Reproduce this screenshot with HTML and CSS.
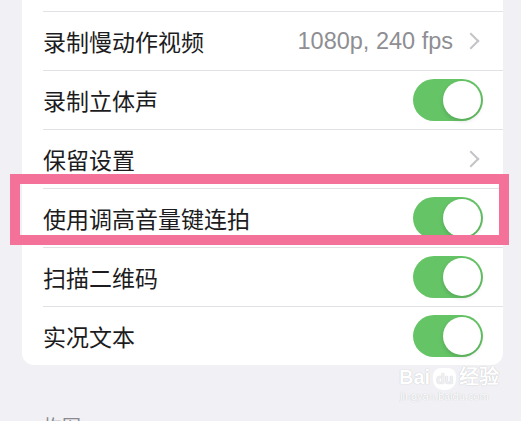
FILE: index.html
```html
<!DOCTYPE html>
<html lang="zh-CN">
<head>
    <meta charset="UTF-8">
    <meta name="viewport" content="width=device-width, initial-scale=1.0">
    <title>相机设置</title>
    <link rel="stylesheet" href="styles.css">
</head>
<body>
    <div class="card">
        <div class="row-top"></div>

        <div class="row">
            <span class="label">录制慢动作视频</span>
            <span class="value">1080p, 240 fps</span>
            <span class="chevron"></span>
        </div>

        <div class="row">
            <span class="label">录制立体声</span>
            <span class="toggle on"></span>
        </div>

        <div class="row">
            <span class="label">保留设置</span>
            <span class="chevron"></span>
        </div>

        <div class="row highlighted">
            <span class="label">使用调高音量键连拍</span>
            <span class="toggle on"></span>
            <div class="mark"></div> <!-- 粉色框 -->
        </div>

        <div class="row">
            <span class="label">扫描二维码</span>
            <span class="toggle on"></span>
        </div>

        <div class="row">
            <span class="label">实况文本</span>
            <span class="toggle on"></span>
        </div>
    </div>

    <div class="section-title">构图</div>

    <div class="watermark">
        <div class="wm-logo">Bai<span class="wm-paw">du</span>经验</div>
        <div class="wm-url">jingyan.baidu.com</div>
    </div>
</body>
</html>
```

FILE: styles.css
```css
body {
    margin: 0;
    background-color: #f0f0f5;
    font-family: "Noto Sans CJK SC", "Noto Sans", sans-serif;
    height: 421px;
    overflow: hidden;
    position: relative;
}

.card {
    background-color: #fff;
    margin: 0 18px 0 22px;
    border-radius: 0 0 12px 12px;
}

.row-top {
    height: 11px;
}

.row {
    display: flex;
    align-items: center;
    height: 58px;
    margin-left: 21px;
    padding-right: 20px;
    border-top: 1px solid #e2e2e6;
    position: relative;
}

.label {
    flex: 1;
    font-size: 23px;
    color: #1c1c1e;
}

.value {
    font-family: "Liberation Sans", Arial, sans-serif;
    font-size: 23.5px;
    color: #8e8e93;
    margin-right: 12px;
}

/* seta cinza */
.chevron {
    width: 10px;
    height: 10px;
    border-top: 2px solid #c4c4c8;
    border-right: 2px solid #c4c4c8;
    transform: rotate(45deg);
    margin-right: 6px;
}

.toggle {
    width: 70px;
    height: 42px;
    border-radius: 21px;
    background-color: #e5e5ea;
    position: relative;
}

.toggle.on {
    background-color: #65c466;
}

.toggle::after {
    content: "";
    position: absolute;
    top: 2px;
    left: 2px;
    width: 38px;
    height: 38px;
    border-radius: 50%;
    background-color: #fff;
    box-shadow: 0 2px 4px rgba(0, 0, 0, 0.15);
}

.toggle.on::after {
    left: 30px;
}

.mark {
    position: absolute;
    top: -15px;
    bottom: 2px;
    left: -33px;
    right: -6px;
    border: 10px solid #f47299;
}

.section-title {
    margin: 47px 0 0 43px;
    font-size: 19px;
    color: #8a8a8e;
}

.watermark {
    position: absolute;
    left: 399px;
    top: 366px;
    color: #fff;
    text-shadow: 0 0 1px rgba(0, 0, 0, 0.25);
}

.wm-logo {
    font-family: "Liberation Sans", Arial, sans-serif;
    font-size: 20px;
    font-weight: bold;
    line-height: 22px;
}

.wm-paw {
    display: inline-block;
    font-size: 14px;
    padding: 0 3px;
    border-radius: 8px 8px 10px 10px;
    background-color: #fff;
    color: #f0f0f5;
    margin: 0 3px;
}

.wm-url {
    font-family: "Liberation Sans", Arial, sans-serif;
    font-size: 11px;
    margin-left: 1px;
}
```
